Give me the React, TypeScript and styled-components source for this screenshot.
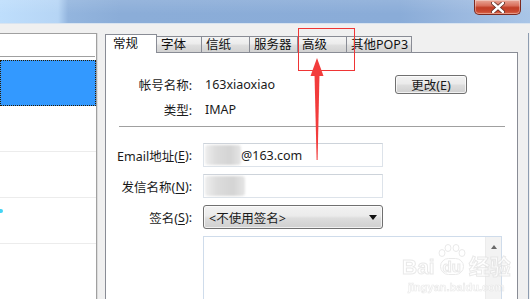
import React from "react";
import styled, { createGlobalStyle } from "styled-components";

const Global = createGlobalStyle`
  html, body { margin: 0; padding: 0; }
  body {
    width: 530px; height: 299px; overflow: hidden;
    font-family: "Noto Sans", "Noto Sans CJK SC", sans-serif;
    font-size: 12px; color: #1a1a1a; background: #f0f0f0;
  }
  * { box-sizing: border-box; }
`;

const Window = styled.div`
  position: relative;
  width: 530px;
  height: 299px;
  overflow: hidden;
  display: flex;
  flex-direction: column;
`;

const TitleBar = styled.div`
  height: 24px;
  flex: none;
  display: flex;
  justify-content: flex-end;
  align-items: flex-start;
  padding-right: 9px;
  border-bottom: 1px solid #d9e4f0;
  background:
    linear-gradient(180deg, rgba(255,255,255,0.10), rgba(255,255,255,0) 60%),
    linear-gradient(90deg, #bedefc 0px, #b6d5f5 58px, #93b5de 68px, #8badd8 120px, #8aacd8 400px, #9ab8df 460px, #a9c5e7 530px);
`;

const CloseButton = styled.div`
  width: 47px;
  height: 15px;
  display: flex;
  align-items: center;
  justify-content: center;
  border: 1px solid #7d2a20;
  border-top: none;
  border-radius: 0 0 5px 5px;
  background: linear-gradient(180deg, #e9a898 0%, #d9705c 40%, #c13e26 55%, #c9472f 80%, #dc6a4e 100%);
  box-shadow: inset 0 0 0 1px rgba(255,255,255,0.35);
`;

const Body = styled.div`
  flex: 1;
  display: flex;
  padding-top: 9px;
  background: #f0f0f0;
  min-height: 0;
`;

const AccountList = styled.div`
  width: 97px;
  flex: none;
  background: #fff;
  border-top: 1px solid #a0a0a0;
  border-right: 1px solid #a0a0a0;
  box-shadow: 1px 0 0 #dcdcdc;
  display: flex;
  flex-direction: column;
`;

const ListHeader = styled.div`
  height: 23px;
  margin-right: 1px;
  margin-bottom: 3px;
  border-bottom: 1px solid #a0a0a0;
  flex: none;
`;

const ListItem = styled.div<{ $selected?: boolean }>`
  height: 46px;
  flex: none;
  display: flex;
  align-items: flex-start;
  background: ${p => (p.$selected ? "#3399ff" : "#fff")};
  border: ${p => (p.$selected ? "1px dotted #2a1a00" : "none")};
  border-bottom: ${p => (p.$selected ? "1px dotted #2a1a00" : "1px solid #ececec")};
`;

const ListIcon = styled.span`
  width: 3px;
  height: 4px;
  margin-top: 11px;
  border-radius: 0 2px 2px 0;
  background: #44d4f4;
`;

const TabArea = styled.div`
  flex: 1;
  margin-left: 8px;
  margin-top: 1px;
  display: flex;
  flex-direction: column;
  min-width: 0;
`;

const TabStrip = styled.div`
  display: flex;
  align-items: flex-end;
  height: 18px;
  flex: none;
`;

const Tab = styled.div<{ $active?: boolean; $w: number }>`
  width: ${p => p.$w}px;
  height: ${p => (p.$active ? 19 : 16)}px;
  margin-bottom: ${p => (p.$active ? -1 : 0)}px;
  position: relative;
  z-index: ${p => (p.$active ? 1 : 0)};
  display: flex;
  align-items: center;
  padding-left: ${p => (p.$active ? 7 : 4)}px;
  padding-top: ${p => (p.$active ? 0 : 1)}px;
  font-size: 12.5px;
  line-height: 1;
  white-space: nowrap;
  color: #111;
  border-top: 1px solid #898c95;
  border-right: 1px solid #898c95;
  border-left: ${p => (p.$active ? "1px solid #898c95" : "none")};
  background: ${p =>
    p.$active
      ? "#fff"
      : "linear-gradient(180deg, #f4f4f4 0%, #ececec 45%, #dedede 55%, #d2d2d2 100%)"};
`;

const TabPanel = styled.div`
  flex: 1;
  background: #fff;
  border: 1px solid #898c95;
  border-bottom: none;
  display: flex;
  flex-direction: column;
  min-height: 0;
`;

const InfoGrid = styled.div`
  margin-top: 21px;
  display: grid;
  grid-template-columns: 86px 1fr;
  grid-auto-rows: 20px;
  column-gap: 11px;
  row-gap: 5px;
`;

const Label = styled.div`
  display: flex;
  align-items: center;
  justify-content: flex-end;
  white-space: nowrap;
  font-size: 12.5px;
`;

const Value = styled.div`
  display: flex;
  align-items: center;
  padding-left: 2px;
  white-space: nowrap;
  font-size: 12.5px;
`;

const ValueText = styled.span`
  width: 190px;
  flex: none;
`;

const Button = styled.div`
  width: 72px;
  height: 19px;
  display: flex;
  align-items: center;
  justify-content: center;
  border: 1px solid #707070;
  border-radius: 3px;
  font-size: 12.5px;
  background: linear-gradient(180deg, #f2f2f2 0%, #ebebeb 45%, #dddddd 55%, #cfcfcf 100%);
  box-shadow: inset 0 0 0 1px rgba(255,255,255,0.7);
`;

const Separator = styled.div`
  height: 1px;
  margin: 7px 12px 0 13px;
  background: #a0a0a0;
  flex: none;
`;

const FormGrid = styled.div`
  margin-top: 16px;
  display: grid;
  grid-template-columns: 86px 1fr;
  grid-template-rows: 24px 24px 24px 70px;
  column-gap: 11px;
  row-gap: 7px;
`;

const TextInput = styled.div`
  width: 180px;
  height: 24px;
  border: 1px solid #dde3ea;
  border-top-color: #cdd3da;
  display: flex;
  align-items: center;
  padding-left: 1px;
  font-size: 12.5px;
  background: #fff;
`;

const Blur = styled.span<{ $w: number }>`
  width: ${p => p.$w}px;
  height: 20px;
  flex: none;
  background: linear-gradient(90deg, #eeeeee 0%, #dcdcdc 30%, #d4d4d4 70%, #e6e6e6 100%);
  filter: blur(1.2px);
  border-radius: 3px;
`;

const Select = styled.div`
  width: 180px;
  height: 24px;
  display: flex;
  align-items: center;
  justify-content: space-between;
  padding: 0 4px 0 5px;
  border: 1px solid #707070;
  border-radius: 3px;
  font-size: 12.5px;
  background: linear-gradient(180deg, #f2f2f2 0%, #ebebeb 45%, #dddddd 55%, #cfcfcf 100%);
  box-shadow: inset 0 0 0 1px rgba(255,255,255,0.7);
`;

const Caret = styled.span`
  width: 0;
  height: 0;
  margin-right: 1px;
  border-left: 4px solid transparent;
  border-right: 4px solid transparent;
  border-top: 5px solid #111;
`;

const TextArea = styled.div`
  width: 299px;
  border: 1px solid #cfdceb;
  border-bottom: none;
  background: #fff;
  display: flex;
  justify-content: flex-end;
`;

const ScrollBar = styled.div`
  width: 16px;
  background: #f3f3f3;
  border-left: 1px solid #ececec;
  display: flex;
  justify-content: center;
  padding-top: 8px;
`;

const UpArrow = styled.span`
  width: 0;
  height: 0;
  border-left: 3.5px solid transparent;
  border-right: 3.5px solid transparent;
  border-bottom: 4px solid #6a6a6a;
`;

const RightFrame = styled.div`
  width: 11px;
  flex: none;
  border-right: 1px solid #8d9cb0;
  margin-right: 1px;
`;

const Accel = styled.span`
  text-decoration: underline;
  text-underline-offset: 2px;
`;

const RedBox = styled.div`
  position: absolute;
  left: 298px;
  top: 28px;
  width: 57px;
  height: 43px;
  border: 1px solid #ef3535;
`;

const Arrow = styled.svg`
  position: absolute;
  left: 308px;
  top: 56px;
`;

const Watermark = styled.div`
  position: absolute;
  left: 402px;
  top: 244px;
  width: 110px;
  display: flex;
  flex-direction: column;
  align-items: flex-start;
  pointer-events: none;
  opacity: 0.75;
`;

const WmLogo = styled.div`
  display: flex;
  align-items: flex-end;
  gap: 2px;
  font-family: "Liberation Sans", "Noto Sans CJK SC", sans-serif;
  font-weight: bold;
  font-size: 21px;
  line-height: 1;
  color: #fff;
  -webkit-text-stroke: 1px #e2e2e2;
`;

const WmPaw = styled.div`
  position: relative;
  display: flex;
  flex-direction: column;
  align-items: center;
`;

const WmDu = styled.span`
  font-size: 15px;
  border: 1px solid #e2e2e2;
  border-radius: 9px;
  padding: 0 2px;
  margin-bottom: 2px;
`;

const WmUrl = styled.div`
  margin-top: 4px;
  margin-left: 6px;
  font-family: "Liberation Sans", sans-serif;
  font-weight: bold;
  font-size: 11px;
  color: #fff;
  -webkit-text-stroke: 0.6px #e2e2e2;
`;

const tabs = [
  { t: "常规", w: 52 },
  { t: "字体", w: 45 },
  { t: "信纸", w: 48 },
  { t: "服务器", w: 48 },
  { t: "高级", w: 49 },
  { t: "其他POP3", w: 65 },
];

export default function App() {
  return (
    <>
      <Global />
      <Window>
        <TitleBar>
          <CloseButton>
            <svg width="14" height="11" viewBox="0 0 14 11">
              <path d="M2 1 L12 10 M12 1 L2 10" stroke="#5a2a22" strokeWidth="4" strokeLinecap="round" />
              <path d="M2 1 L12 10 M12 1 L2 10" stroke="#ffffff" strokeWidth="2.4" strokeLinecap="round" />
            </svg>
          </CloseButton>
        </TitleBar>
        <Body>
          <AccountList>
            <ListHeader />
            <ListItem $selected />
            <ListItem />
            <ListItem />
            <ListItem>
              <ListIcon />
            </ListItem>
          </AccountList>
          <TabArea>
            <TabStrip>
              {tabs.map((t, i) => (
                <Tab key={t.t} $active={i === 0} $w={t.w}>
                  {t.t}
                </Tab>
              ))}
            </TabStrip>
            <TabPanel>
              <InfoGrid>
                <Label>帐号名称:</Label>
                <Value>
                  <ValueText>163xiaoxiao</ValueText>
                  <Button>更改(E)</Button>
                </Value>
                <Label>类型:</Label>
                <Value>IMAP</Value>
              </InfoGrid>
              <Separator />
              <FormGrid>
                <Label>
                  Email地址(<Accel>E</Accel>):
                </Label>
                <TextInput>
                  <Blur $w={36} />
                  <span>@163.com</span>
                </TextInput>
                <Label>
                  发信名称(<Accel>N</Accel>):
                </Label>
                <TextInput>
                  <Blur $w={40} />
                </TextInput>
                <Label>
                  签名(<Accel>S</Accel>):
                </Label>
                <Select>
                  <span>&lt;不使用签名&gt;</span>
                  <Caret />
                </Select>
                <div />
                <TextArea>
                  <ScrollBar>
                    <UpArrow />
                  </ScrollBar>
                </TextArea>
              </FormGrid>
            </TabPanel>
          </TabArea>
          <RightFrame />
        </Body>
        <RedBox />
        <Arrow width="20" height="108" viewBox="0 0 20 108">
          <polygon points="9,2 2.5,20 15.5,20" fill="#f23c3c" />
          <polygon points="6.5,18 11.5,18 9.6,104 8.6,104" fill="#f23c3c" />
        </Arrow>
        <Watermark>
          <WmLogo>
            <span>Bai</span>
            <WmPaw>
              <svg width="30" height="14" viewBox="0 0 30 14">
                <g fill="#fff" stroke="#e2e2e2" strokeWidth="1">
                  <ellipse cx="5" cy="9" rx="3" ry="3.5" />
                  <ellipse cx="11" cy="4" rx="3" ry="3.5" />
                  <ellipse cx="19" cy="4" rx="3" ry="3.5" />
                  <ellipse cx="25" cy="9" rx="3" ry="3.5" />
                </g>
              </svg>
              <WmDu>du</WmDu>
            </WmPaw>
            <span>经验</span>
          </WmLogo>
          <WmUrl>jingyan.baidu.com</WmUrl>
        </Watermark>
      </Window>
    </>
  );
}
